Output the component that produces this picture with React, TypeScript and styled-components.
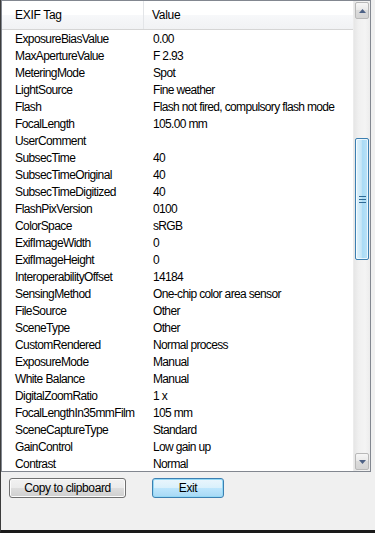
import React from "react";
import styled, { createGlobalStyle } from "styled-components";

const Global = createGlobalStyle`
  html, body { margin: 0; padding: 0; background: #f0f0f0; }
  * { box-sizing: border-box; }
`;

const Window = styled.div`
  width: 375px;
  height: 533px;
  background: #f0f0f0;
  border-left: 1px solid #3c3c3c;
  border-bottom: 3px solid #1a1a1a;
  display: flex;
  flex-direction: column;
  font-family: "Liberation Sans", Arial, sans-serif;
  font-size: 11px;
  color: #000;
`;

const ListView = styled.div`
  width: 370px;
  height: 472px;
  border: 1px solid #828790;
  background: #fff;
  display: flex;
  overflow: hidden;
`;

const Content = styled.div`
  flex: 1;
  display: flex;
  flex-direction: column;
  overflow: hidden;
`;

const Header = styled.div`
  height: 29px;
  flex-shrink: 0;
  display: grid;
  grid-template-columns: 142px 1fr;
  background: linear-gradient(#ffffff, #ffffff 50%, #f7f8fa 50%, #f1f2f4);
  border-bottom: 1px solid #d5d5d5;
`;

const HeaderCell = styled.div<{ $sep?: boolean }>`
  display: flex;
  align-items: center;
  padding-left: ${(p) => (p.$sep ? "8px" : "13px")};
  border-right: ${(p) => (p.$sep ? "none" : "1px solid #e3e5e8")};
  font-size: 12px;
  letter-spacing: -0.3px;
`;

const Row = styled.div`
  height: 17px;
  flex-shrink: 0;
  display: grid;
  grid-template-columns: 142px 1fr;
  align-items: center;
  white-space: nowrap;
`;

const Cell = styled.div<{ $value?: boolean }>`
  padding-left: ${(p) => (p.$value ? "9px" : "13px")};
  font-size: 12px;
  letter-spacing: ${(p) => (p.$value ? "-0.65px" : "-0.6px")};
  overflow: hidden;
`;

const ScrollBar = styled.div`
  width: 17px;
  flex-shrink: 0;
  display: flex;
  flex-direction: column;
  background: linear-gradient(to right, #e6e6e6, #f0f0f0 30%, #f4f4f4 70%, #ececec);
  border-left: 1px solid #ececec;
`;

const ArrowButton = styled.div`
  height: 17px;
  flex-shrink: 0;
  margin: 1px;
  border: 1px solid #b8b8b8;
  border-radius: 2px;
  background: linear-gradient(#f6f6f6, #e8e8e8 50%, #dcdcdc 50%, #d4d4d4);
  display: flex;
  align-items: center;
  justify-content: center;
`;

const Track = styled.div`
  flex: 1;
  display: flex;
  flex-direction: column;
`;

const Gap = styled.div<{ $h: number }>`
  height: ${(p) => p.$h}px;
  flex-shrink: 0;
`;

const Thumb = styled.div`
  height: 122px;
  margin: 0 1px;
  border: 1px solid #3c7fb1;
  border-radius: 2px;
  background: linear-gradient(to right, #e3f4fc, #c4e5f7 45%, #a9dbf6 55%, #bde3f7);
  box-shadow: inset 0 0 0 1px rgba(255, 255, 255, 0.7);
  display: flex;
  align-items: center;
  justify-content: center;
`;

const ButtonBar = styled.div`
  display: flex;
  gap: 26px;
  padding: 6px 0 0 8px;
`;

const Button = styled.button<{ $w: number; $default?: boolean }>`
  width: ${(p) => p.$w}px;
  height: 20px;
  padding: 0;
  border: 1px solid ${(p) => (p.$default ? "#3c7fb1" : "#707070")};
  border-radius: 3px;
  background: ${(p) =>
    p.$default
      ? "linear-gradient(#eaf6fd, #d9f0fc 50%, #bee6fd 50%, #a7d9f5)"
      : "linear-gradient(#f2f2f2, #ebebeb 50%, #dddddd 50%, #cfcfcf)"};
  box-shadow: inset 0 0 0 1px ${(p) => (p.$default ? "#94d9f6" : "#fcfcfc")};
  font-family: "Liberation Sans", Arial, sans-serif;
  font-size: 12px;
  letter-spacing: -0.4px;
  color: #000;
`;

const rows: [string, string][] = [
  ["ExposureBiasValue", "0.00"],
  ["MaxApertureValue", "F 2.93"],
  ["MeteringMode", "Spot"],
  ["LightSource", "Fine weather"],
  ["Flash", "Flash not fired, compulsory flash mode"],
  ["FocalLength", "105.00 mm"],
  ["UserComment", ""],
  ["SubsecTime", "40"],
  ["SubsecTimeOriginal", "40"],
  ["SubsecTimeDigitized", "40"],
  ["FlashPixVersion", "0100"],
  ["ColorSpace", "sRGB"],
  ["ExifImageWidth", "0"],
  ["ExifImageHeight", "0"],
  ["InteroperabilityOffset", "14184"],
  ["SensingMethod", "One-chip color area sensor"],
  ["FileSource", "Other"],
  ["SceneType", "Other"],
  ["CustomRendered", "Normal process"],
  ["ExposureMode", "Manual"],
  ["White Balance", "Manual"],
  ["DigitalZoomRatio", "1 x"],
  ["FocalLengthIn35mmFilm", "105 mm"],
  ["SceneCaptureType", "Standard"],
  ["GainControl", "Low gain up"],
  ["Contrast", "Normal"],
];

const UpIcon = () => (
  <svg width="7" height="4" viewBox="0 0 7 4">
    <path d="M3.5 0 L7 4 L0 4 Z" fill="#4d6185" />
  </svg>
);
const DownIcon = () => (
  <svg width="7" height="4" viewBox="0 0 7 4">
    <path d="M0 0 L7 0 L3.5 4 Z" fill="#4d6185" />
  </svg>
);
const Grip = () => (
  <svg width="7" height="7" viewBox="0 0 7 7">
    <rect x="0" y="0" width="7" height="1" fill="#2f6a96" />
    <rect x="0" y="3" width="7" height="1" fill="#2f6a96" />
    <rect x="0" y="6" width="7" height="1" fill="#2f6a96" />
  </svg>
);

export default function App() {
  return (
    <>
      <Global />
      <Window>
        <ListView>
          <Content>
            <Header>
              <HeaderCell>EXIF Tag</HeaderCell>
              <HeaderCell $sep>Value</HeaderCell>
            </Header>
            {rows.map(([k, v]) => (
              <Row key={k}>
                <Cell>{k}</Cell>
                <Cell $value>{v}</Cell>
              </Row>
            ))}
          </Content>
          <ScrollBar>
            <ArrowButton>
              <UpIcon />
            </ArrowButton>
            <Track>
              <Gap $h={118} />
              <Thumb>
                <Grip />
              </Thumb>
            </Track>
            <ArrowButton>
              <DownIcon />
            </ArrowButton>
          </ScrollBar>
        </ListView>
        <ButtonBar>
          <Button $w={117}>Copy to clipboard</Button>
          <Button $w={72} $default>
            Exit
          </Button>
        </ButtonBar>
      </Window>
    </>
  );
}
